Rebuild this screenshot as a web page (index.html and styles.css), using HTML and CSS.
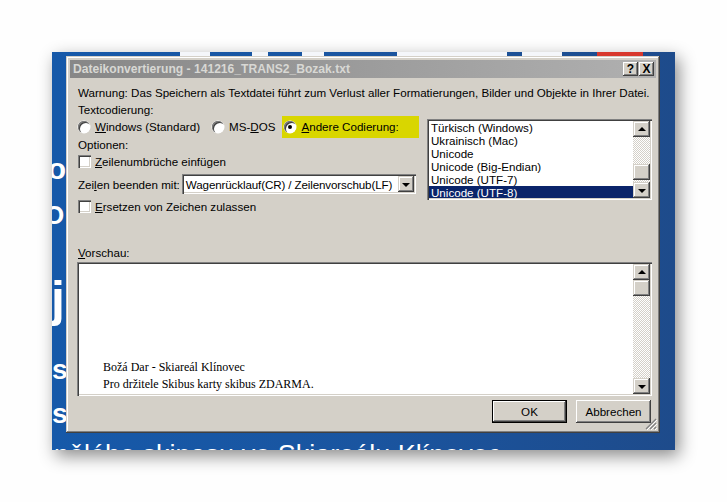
FILE: index.html
```html
<!DOCTYPE html>
<html lang="de">
<head>
<meta charset="utf-8">
<title>Dateikonvertierung</title>
<link rel="stylesheet" href="styles.css">
</head>
<body>
<div class="shot">
  <div class="bg">
    <span class="patch p1"></span><span class="patch p2"></span><span class="patch p3"></span><span class="patch p4"></span><span class="patch p5"></span><span class="patch red"></span>
    <span class="bgt t1">Bož</span>
    <span class="bgt t2">O</span>
    <span class="bgt t3">j</span>
    <span class="bgt t4">s</span>
    <span class="bgt t5">sl</span>
    <span class="bgt t6">nělého skipasu ve Skiareálu Klínovec</span>
  </div>
  <div class="dialog">
    <div class="titlebar">
      <span class="title">Dateikonvertierung - 141216_TRANS2_Bozak.txt</span>
      <div class="tbtns"><span class="tb">?</span><span class="tb">X</span></div>
    </div>
    <div class="body">
      <div class="line">Warnung: Das Speichern als Textdatei führt zum Verlust aller Formatierungen, Bilder und Objekte in Ihrer Datei.</div>
      <div class="line">Textcodierung:</div>
      <div class="row">
        <div class="leftcol">
          <div class="radios">
            <span class="radio r1"><span class="rb"></span><span><u>W</u>indows (Standard)</span></span>
            <span class="radio r2"><span class="rb"></span><span>MS-<u>D</u>OS</span></span>
            <span class="radio r3 hl"><span class="rb on"></span><span><u>A</u>ndere Codierung:</span></span>
          </div>
          <div class="line opt">Optionen:</div>
          <div class="check"><span class="cb"></span><span><u>Z</u>eilenumbrüche einfügen</span></div>
          <div class="selrow">
            <span>Zei<u>l</u>en beenden mit:</span>
            <div class="select"><span class="seltext">Wagenrücklauf(CR) / Zeilenvorschub(LF)</span><span class="sbtn dn"></span></div>
          </div>
          <div class="check"><span class="cb"></span><span><u>E</u>rsetzen von Zeichen zulassen</span></div>
        </div>
        <div class="listbox">
          <ul class="items">
            <li>Türkisch (Windows)</li>
            <li>Ukrainisch (Mac)</li>
            <li>Unicode</li>
            <li>Unicode (Big-Endian)</li>
            <li>Unicode (UTF-7)</li>
            <li class="sel">Unicode (UTF-8)</li>
          </ul>
          <div class="vscroll">
            <span class="sbtn up"></span>
            <div class="track lt"><span class="thumb"></span></div>
            <span class="sbtn dn"></span>
          </div>
        </div>
      </div>
      <div class="line vlabel"><u>V</u>orschau:</div>
      <div class="preview">
        <div class="ptext">
          <p>Božá Dar - Skiareál Klínovec</p>
          <p>Pro držitele Skibus karty skibus ZDARMA.</p>
        </div>
        <div class="vscroll">
          <span class="sbtn up"></span>
          <span class="thumb"></span>
          <div class="track"></div>
          <span class="sbtn dn"></span>
        </div>
      </div>
      <div class="buttons">
        <span class="btn def">OK</span>
        <span class="btn">Abbrechen</span>
      </div>
    </div>
    <svg class="grip" width="12" height="12" viewBox="0 0 12 12">
      <path d="M11 1L1 11M11 5L5 11M11 9L9 11" stroke="#808080" stroke-width="1.2"/>
      <path d="M12 2L2 12M12 6L6 12M12 10L10 12" stroke="#fff" stroke-width="1"/>
    </svg>
  </div>
</div>
<svg class="overlay" width="727" height="502" viewBox="0 0 727 502">
  <defs>
    <filter id="sh" x="-50%" y="-50%" width="200%" height="200%">
      <feGaussianBlur stdDeviation="2"/>
    </filter>
  </defs>
  <g transform="translate(3,3)" filter="url(#sh)" opacity="0.55">
    <path d="M457 328 L474 217" stroke="#333" stroke-width="9" stroke-linecap="round"/>
    <polygon points="476,204 484,222 474,217 463,219" fill="#333" stroke="#333" stroke-width="4" stroke-linejoin="round"/>
  </g>
  <path d="M457 328 L474 217" stroke="#fff" stroke-width="9" stroke-linecap="round"/>
  <polygon points="476,204 484,222 474,217 463,219" fill="#fff" stroke="#fff" stroke-width="4" stroke-linejoin="round"/>
  <path d="M457 328 L474 216" stroke="#e10000" stroke-width="5" stroke-linecap="round"/>
  <polygon points="476,205 483,221 474,218 464,219" fill="#e10000" stroke="#e10000" stroke-width="1.5" stroke-linejoin="round"/>
  <path d="M646.5 322.5 L646.5 338.5 L650.5 334.5 L653.5 341 L655.5 340 L652.5 333.5 L658 333.5 Z" fill="#fff" stroke="#000" stroke-width="1" stroke-linejoin="miter"/>
</svg>
</body>
</html>
```
FILE: styles.css
```css
html, body {
  margin: 0;
  background: #fefefe;
}
body {
  width: 727px;
  height: 502px;
  overflow: hidden;
  position: relative;
  font-family: "Liberation Sans", Arial, sans-serif;
  font-size: 11.6px;
  color: #000;
}
.shot {
  position: relative;
  top: 52px;
  left: 52px;
  width: 623px;
  height: 398px;
  overflow: hidden;
  background: linear-gradient(90deg, #1659a9 0%, #1a55a0 50%, #1e4b8b 100%);
  box-shadow: 4px 6px 16px rgba(0, 0, 0, 0.45);
}
.bg {
  position: absolute;
  inset: 0;
}
.patch {
  position: absolute;
  top: 0;
  height: 4px;
  background: #f4f6fa;
}
.p1 { left: 128px; width: 30px; }
.p2 { left: 200px; width: 16px; }
.p3 { left: 250px; width: 22px; }
.p4 { left: 345px; width: 110px; }
.p5 { left: 470px; width: 40px; }
.red { left: 545px; width: 46px; background: #d8382c; }
.bgt {
  position: absolute;
  color: #fff;
  font-weight: 700;
  white-space: nowrap;
  line-height: 1;
}
.t1 { top: 102px; left: -26px; font-size: 30px; }
.t2 { top: 150px; left: -8px; font-size: 26px; }
.t3 { top: 222px; left: -1px; font-size: 50px; }
.t4 { top: 304px; left: 0; font-size: 28px; }
.t5 { top: 348px; left: 0; font-size: 28px; letter-spacing: -2px; }
.t6 { top: 390px; left: 2px; font-size: 27px; font-weight: 400; }

.dialog {
  position: relative;
  z-index: 1;
  margin: 4px 0 0 14px;
  width: 594px;
  height: 377px;
  box-sizing: border-box;
  padding: 4px;
  background: #d4d0c8;
  box-shadow: inset -1px -1px #404040, inset 1px 1px #d4d0c8, inset -2px -2px #808080, inset 2px 2px #fff;
}
.titlebar {
  height: 18px;
  display: flex;
  align-items: center;
  justify-content: space-between;
  padding: 0 2px 0 3px;
  background: linear-gradient(90deg, #878787, #b0b0b0);
}
.title {
  color: #d8d8d4;
  font-weight: 700;
  font-size: 12.1px;
  white-space: nowrap;
}
.tbtns {
  display: flex;
  gap: 1px;
}
.tb {
  width: 15px;
  height: 14px;
  display: flex;
  align-items: center;
  justify-content: center;
  font-weight: 700;
  font-size: 12px;
  background: #d4d0c8;
  box-shadow: inset -1px -1px #404040, inset 1px 1px #fff, inset -2px -2px #808080;
}
.body {
  padding: 6px 4px 0 7px;
}
.line {
  height: 17px;
  line-height: 17px;
  padding-left: 1px;
  white-space: nowrap;
}
u {
  text-decoration: underline;
  text-underline-offset: 1px;
}
.row {
  display: flex;
  justify-content: space-between;
  align-items: flex-start;
}
.leftcol {
  padding-left: 1px;
}
.radios {
  display: flex;
  align-items: center;
  height: 17px;
}
.radio {
  display: flex;
  align-items: center;
  gap: 5px;
  white-space: nowrap;
}
.r2 { margin-left: 12px; }
.hl {
  background: #d9d600;
  padding: 4px 20px 5px 2px;
  margin: -4px 0 -5px 7px;
}
.rb {
  position: relative;
  width: 12px;
  height: 12px;
  flex: none;
  border-radius: 50%;
  background: #fff;
  box-shadow: inset 1px 1px 0 #808080, inset 2px 2px 0 #404040, 0 0 0 0.5px #fff;
}
.rb.on::after {
  content: "";
  position: absolute;
  left: 4px;
  top: 4px;
  width: 4px;
  height: 4px;
  border-radius: 50%;
  background: #000;
}
.opt { margin-top: 1px; padding-left: 0; }
.check {
  display: flex;
  align-items: center;
  gap: 4px;
  height: 17px;
  white-space: nowrap;
}
.cb {
  width: 13px;
  height: 13px;
  flex: none;
  box-sizing: border-box;
  background: #fff;
  box-shadow: inset 1px 1px #808080, inset 2px 2px #404040, inset -1px -1px #fff, inset -2px -2px #d4d0c8;
}
.selrow {
  display: flex;
  align-items: center;
  gap: 2px;
  margin: 4px 0;
  white-space: nowrap;
}
.select {
  width: 234px;
  height: 20px;
  box-sizing: border-box;
  padding: 2px;
  display: flex;
  align-items: center;
  justify-content: space-between;
  background: #fff;
  box-shadow: inset 1px 1px #808080, inset 2px 2px #404040, inset -1px -1px #fff, inset -2px -2px #d4d0c8;
}
.seltext {
  padding-left: 2px;
  letter-spacing: -0.12px;
}
.sbtn {
  width: 16px;
  height: 16px;
  flex: none;
  display: flex;
  align-items: center;
  justify-content: center;
  box-sizing: border-box;
  background: #d4d0c8;
  box-shadow: inset -1px -1px #404040, inset 1px 1px #d4d0c8, inset -2px -2px #808080, inset 2px 2px #fff;
}
.sbtn::after {
  content: "";
  width: 0;
  height: 0;
  border-left: 4px solid transparent;
  border-right: 4px solid transparent;
}
.sbtn.dn::after { border-top: 4px solid #000; margin-top: 1px; }
.sbtn.up::after { border-bottom: 4px solid #000; margin-top: -1px; }

.listbox {
  width: 225px;
  height: 81px;
  margin-top: 1px;
  box-sizing: border-box;
  padding: 2px;
  display: flex;
  background: #fff;
  box-shadow: inset 1px 1px #808080, inset 2px 2px #404040, inset -1px -1px #fff, inset -2px -2px #d4d0c8;
}
.items {
  list-style: none;
  margin: 0;
  padding: 0;
  flex: 1;
  overflow: hidden;
}
.items li {
  height: 13px;
  line-height: 13px;
  padding-left: 2px;
  white-space: nowrap;
}
.items li.sel {
  background: #0a246a;
  color: #fff;
}
.vscroll {
  width: 17px;
  display: flex;
  flex-direction: column;
}
.vscroll .sbtn {
  width: 17px;
}
.track {
  flex: 1;
  background-image: repeating-conic-gradient(#fff 0 25%, #d4d0c8 0 50%);
  background-size: 2px 2px;
}
.thumb {
  display: block;
  width: 17px;
  height: 16px;
  box-sizing: border-box;
  background: #d4d0c8;
  box-shadow: inset -1px -1px #404040, inset 1px 1px #d4d0c8, inset -2px -2px #808080, inset 2px 2px #fff;
}
.track.lt {
  padding-top: 27px;
}
.vlabel {
  margin-top: 29px;
}
.preview {
  height: 134px;
  margin-top: 1px;
  box-sizing: border-box;
  padding: 2px;
  display: flex;
  background: #fff;
  box-shadow: inset 1px 1px #808080, inset 2px 2px #404040, inset -1px -1px #fff, inset -2px -2px #d4d0c8;
}
.ptext {
  flex: 1;
  padding: 95px 0 0 24px;
  font-family: "Liberation Serif", "Times New Roman", serif;
  font-size: 12px;
}
.ptext p {
  margin: 0;
  height: 17px;
  line-height: 17px;
  white-space: nowrap;
}
.buttons {
  display: flex;
  justify-content: flex-end;
  gap: 9px;
  margin-top: 4px;
  padding-right: 1px;
}
.btn {
  width: 75px;
  height: 23px;
  box-sizing: border-box;
  display: flex;
  align-items: center;
  justify-content: center;
  background: #d4d0c8;
  box-shadow: inset -1px -1px #404040, inset 1px 1px #fff, inset -2px -2px #808080, inset 2px 2px #d4d0c8;
}
.btn.def {
  box-shadow: inset 0 0 0 1px #000, inset -2px -2px #404040, inset 2px 2px #fff, inset -3px -3px #808080;
}
.grip {
  position: absolute;
  right: 3px;
  bottom: 3px;
}
.overlay {
  position: absolute;
  left: 0;
  top: 0;
  pointer-events: none;
}
```
